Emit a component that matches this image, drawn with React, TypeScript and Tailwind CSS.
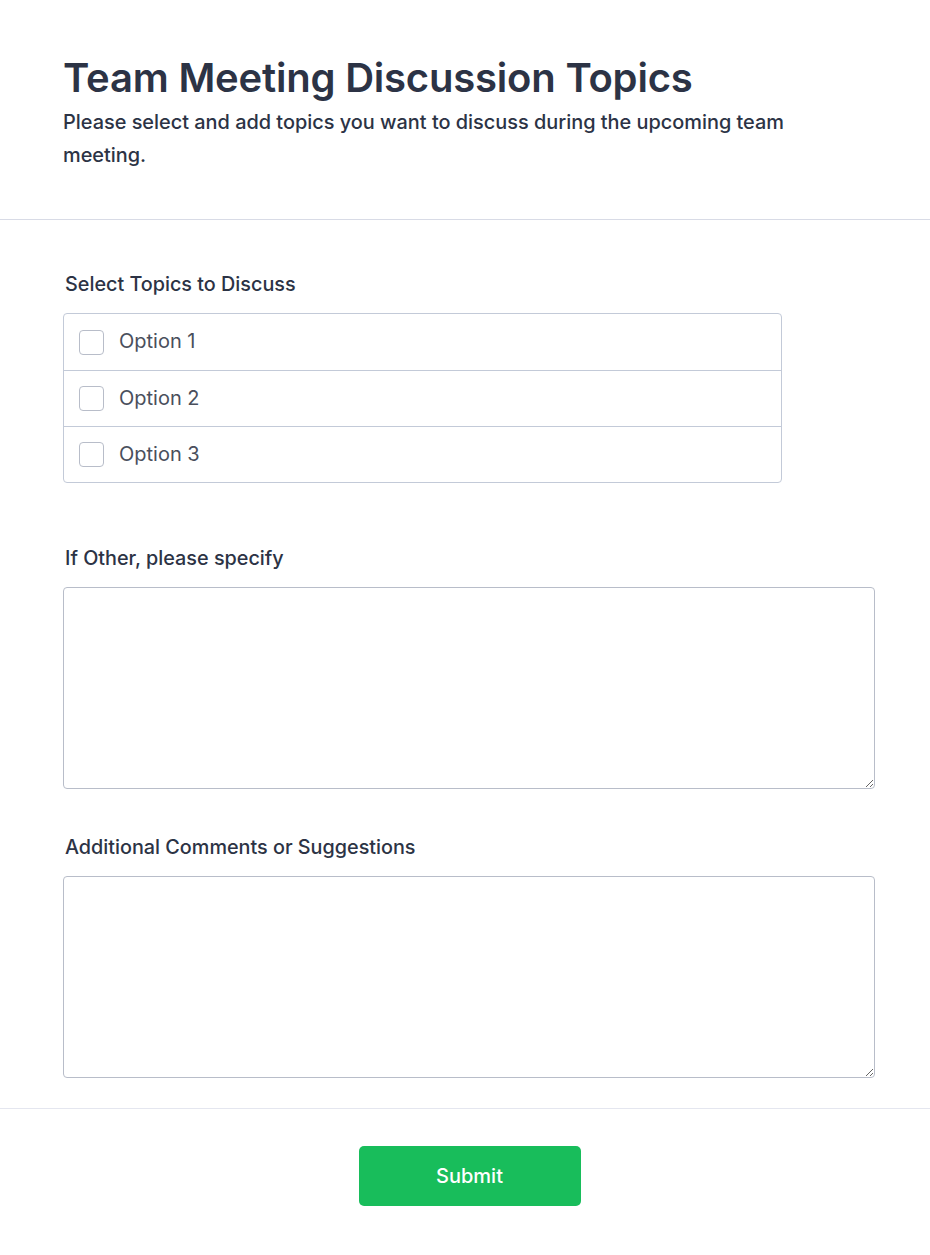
import React from "react";

export default function App() {
  const options = ["Option 1", "Option 2", "Option 3"];
  return (
    <div className="min-h-[1255px] bg-white text-[#2c3345]" style={{ fontFamily: "Inter, 'Noto Sans', sans-serif" }}>
      <div className="pl-[63px] pr-[55px] pt-[52px] pb-[47px] border-b border-[#d8dbe6]">
        <h1 className="text-[40px] leading-[52px] font-semibold tracking-[-0.2px]">Team Meeting Discussion Topics</h1>
        <p className="mt-[2px] text-[19.9px] leading-[33px] font-medium max-w-[740px]">
          Please select and add topics you want to discuss during the upcoming team meeting.
        </p>
      </div>

      <div className="pl-[63px] pr-[55px] pt-[50px] pb-[30px] border-b border-[#e4e6ef]">
        <div className="mb-[61px]">
          <label className="block ml-[2px] text-[19.8px] leading-[28px] font-medium mb-[15px]">Select Topics to Discuss</label>
          <div className="w-[719px] border border-[#c3cad8] rounded-[4px]">
            {options.map((o, i) => (
              <label
                key={o}
                className={`flex items-center h-[56px] px-[15px] gap-[15px] ${i > 0 ? "border-t border-[#c3cad8]" : ""}`}
              >
                <span className="w-[25px] h-[25px] rounded-[4px] border border-[#b8bdc9] bg-white" />
                <span className="text-[20px] leading-[24px] pb-[2px] text-[#4a4f5c]">{o}</span>
              </label>
            ))}
          </div>
        </div>

        <div className="mb-[44px]">
          <label className="block ml-[2px] text-[19.8px] leading-[28px] font-medium mb-[15px]">If Other, please specify</label>
          <textarea className="block w-full h-[202px] border border-[#b8bdc9] rounded-[4px] bg-white" />
        </div>

        <div>
          <label className="block ml-[2px] text-[19.8px] leading-[28px] font-medium mb-[15px]">Additional Comments or Suggestions</label>
          <textarea className="block w-full h-[202px] border border-[#b8bdc9] rounded-[4px] bg-white" />
        </div>
      </div>

      <div className="flex justify-center pl-[64px] pr-[55px] pt-[37px]">
        <button className="w-[222px] h-[60px] rounded-[5px] bg-[#18bd5b] text-white text-[20px] font-medium">Submit</button>
      </div>
    </div>
  );
}
